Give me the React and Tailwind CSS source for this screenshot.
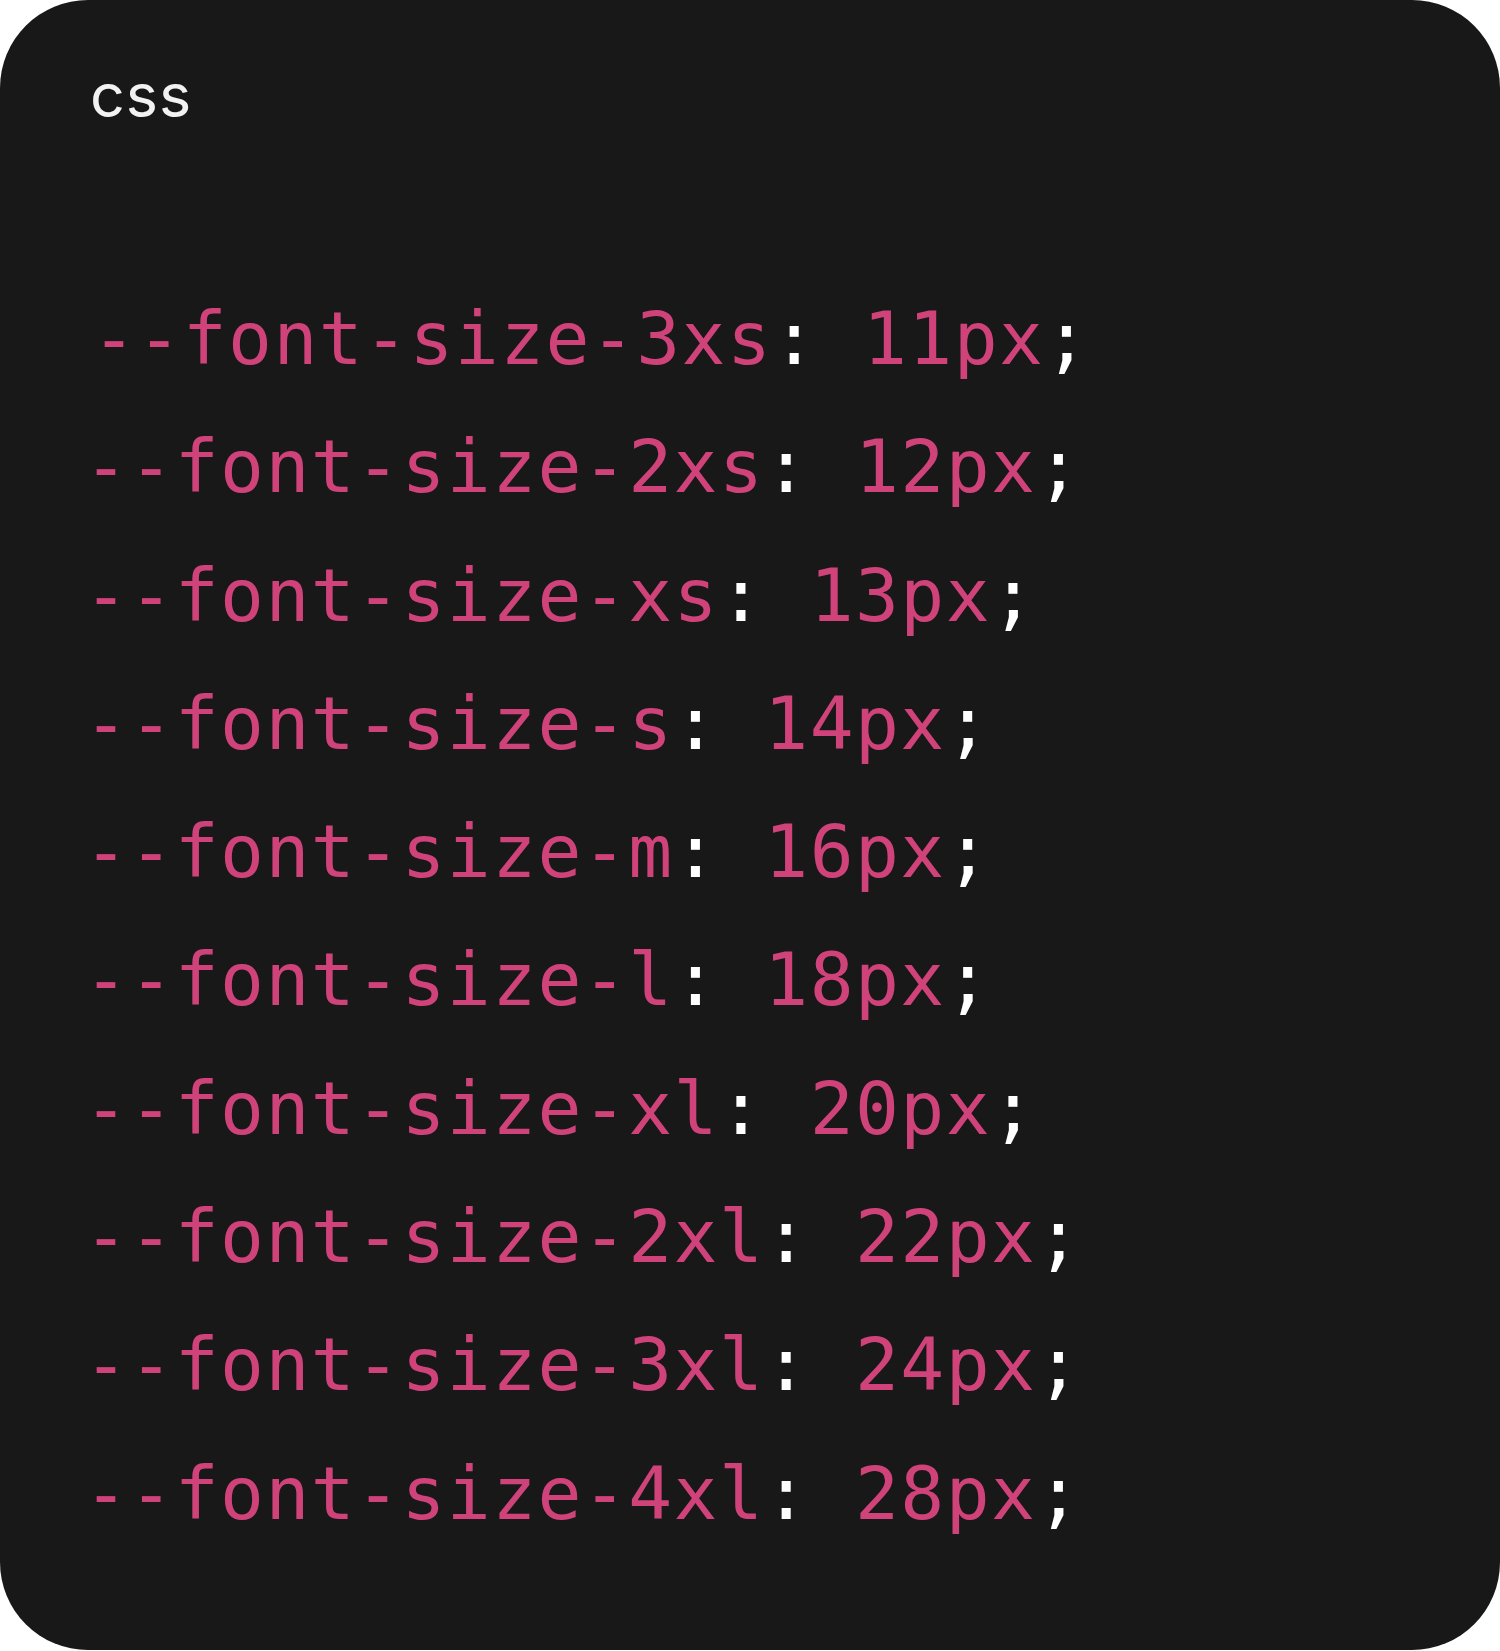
import React from 'react';

const lines = [
  ['3xs', '11px'],
  ['2xs', '12px'],
  ['xs', '13px'],
  ['s', '14px'],
  ['m', '16px'],
  ['l', '18px'],
  ['xl', '20px'],
  ['2xl', '22px'],
  ['3xl', '24px'],
  ['4xl', '28px'],
];

const App = () => {
  return (
    <div className="min-h-[1651px] w-[1500px] bg-white">
      <div className="h-[1650px] w-[1500px] rounded-[88px] bg-[#181818] pl-[90px] pt-[55px]">
        <div className="font-['Inter',sans-serif] text-[61px] leading-[80px] text-[#f2f2f2] tracking-[1px]">css</div>
        <pre className="-ml-[6px] mt-[140px] font-['DejaVu_Sans_Mono',monospace] text-[73px] leading-[128.3px] tracking-[1.4px] text-[#cf437a]">
          {lines.map(([name, size], i) => (
            <div key={name} className={i === 0 ? 'ml-[8px]' : ''}>
              --font-size-{name}<span className="text-white">:</span> {size}<span className="text-white">;</span>
            </div>
          ))}
        </pre>
      </div>
    </div>
  );
};

export default App;
